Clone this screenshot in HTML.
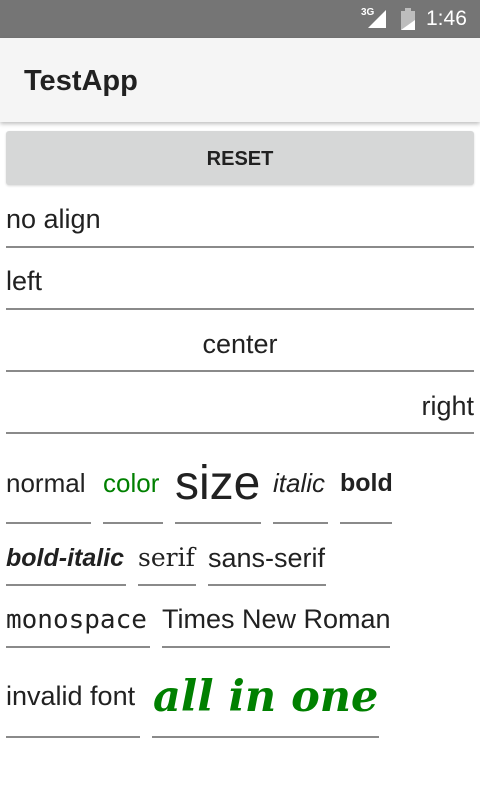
<!DOCTYPE html>
<html><head><meta charset="utf-8"><style>
body{margin:0;width:480px;height:800px;background:#fff;position:relative;overflow:hidden;font-family:"Liberation Sans",Arial,sans-serif;color:#212121}
.a{position:absolute;white-space:nowrap;line-height:30px;font-size:27px}
.l{position:absolute;height:2px;background:#8a8a8a}
</style></head><body>
<div style="position:absolute;left:0;top:0;width:480px;height:38px;background:#757575"></div>
<div style="position:absolute;left:361px;top:7px;font-size:10px;font-weight:bold;color:#fff">3G</div>
<svg style="position:absolute;left:366px;top:8px" width="22" height="22"><polygon points="20,2 20,20 2,20" fill="#fff"/></svg>
<svg style="position:absolute;left:400px;top:7px" width="16" height="24"><rect x="1" y="4" width="14" height="19" fill="#bdbdbd"/><rect x="5" y="1" width="6" height="4" fill="#bdbdbd"/><polygon points="1,23 15,13 15,23" fill="#fff"/></svg>
<div style="position:absolute;left:426px;top:7px;font-size:21px;color:#fff;line-height:24px">1:46</div>
<div style="position:absolute;left:0;top:38px;width:480px;height:84px;background:#f5f5f5;box-shadow:0 2px 4px rgba(0,0,0,.25)"></div>
<div class="a" style="left:24px;top:66px;font-size:29px;font-weight:bold">TestApp</div>
<div style="position:absolute;left:6px;top:131px;width:468px;height:54px;background:#d6d7d7;border-radius:3px;box-shadow:0 1px 2px rgba(0,0,0,.15)"></div>
<div class="a" style="left:0;width:480px;text-align:center;top:144px;font-size:20px;font-weight:bold">RESET</div>
<div class="a" style="left:6px;top:204px">no align</div><div class="l" style="left:6px;width:468px;top:246px"></div>
<div class="a" style="left:6px;top:266px">left</div><div class="l" style="left:6px;width:468px;top:308px"></div>
<div class="a" style="left:6px;width:468px;text-align:center;top:329px">center</div><div class="l" style="left:6px;width:468px;top:370px"></div>
<div class="a" style="left:6px;width:468px;text-align:right;top:391px">right</div><div class="l" style="left:6px;width:468px;top:432px"></div>
<div class="a" style="left:6px;top:468px;font-size:26px">normal</div><div class="l" style="left:6px;width:85px;top:522px"></div>
<div class="a" style="left:103px;top:468px;color:#008000;font-size:26px">color</div><div class="l" style="left:103px;width:60px;top:522px"></div>
<div class="a" style="left:175px;top:464px;font-size:48px;line-height:40px">size</div><div class="l" style="left:175px;width:86px;top:522px"></div>
<div class="a" style="left:273px;top:468px;font-style:italic;font-size:26px">italic</div><div class="l" style="left:273px;width:55px;top:522px"></div>
<div class="a" style="left:340px;top:468px;font-weight:bold;font-size:25px">bold</div><div class="l" style="left:340px;width:52px;top:522px"></div>
<div class="a" style="left:6px;top:543px;font-weight:bold;font-style:italic;font-size:25px">bold-italic</div><div class="l" style="left:6px;width:120px;top:584px"></div>
<div class="a" style="left:138px;top:543px;font-family:'DejaVu Serif',serif;font-size:25px">serif</div><div class="l" style="left:138px;width:58px;top:584px"></div>
<div class="a" style="left:208px;top:543px;font-size:27px">sans-serif</div><div class="l" style="left:208px;width:118px;top:584px"></div>
<div class="a" style="left:6px;top:605px;font-family:'DejaVu Sans Mono',monospace;font-size:26px">monospace</div><div class="l" style="left:6px;width:144px;top:646px"></div>
<div class="a" style="left:162px;top:604px">Times New Roman</div><div class="l" style="left:162px;width:228px;top:646px"></div>
<div class="a" style="left:6px;top:681px">invalid font</div><div class="l" style="left:6px;width:134px;top:736px"></div>
<div class="a" style="left:153px;top:675px;font-family:'DejaVu Serif',serif;font-weight:bold;font-style:italic;font-size:43px;line-height:44px;color:#008000">all in one</div><div class="l" style="left:152px;width:227px;top:736px"></div>
</body></html>
